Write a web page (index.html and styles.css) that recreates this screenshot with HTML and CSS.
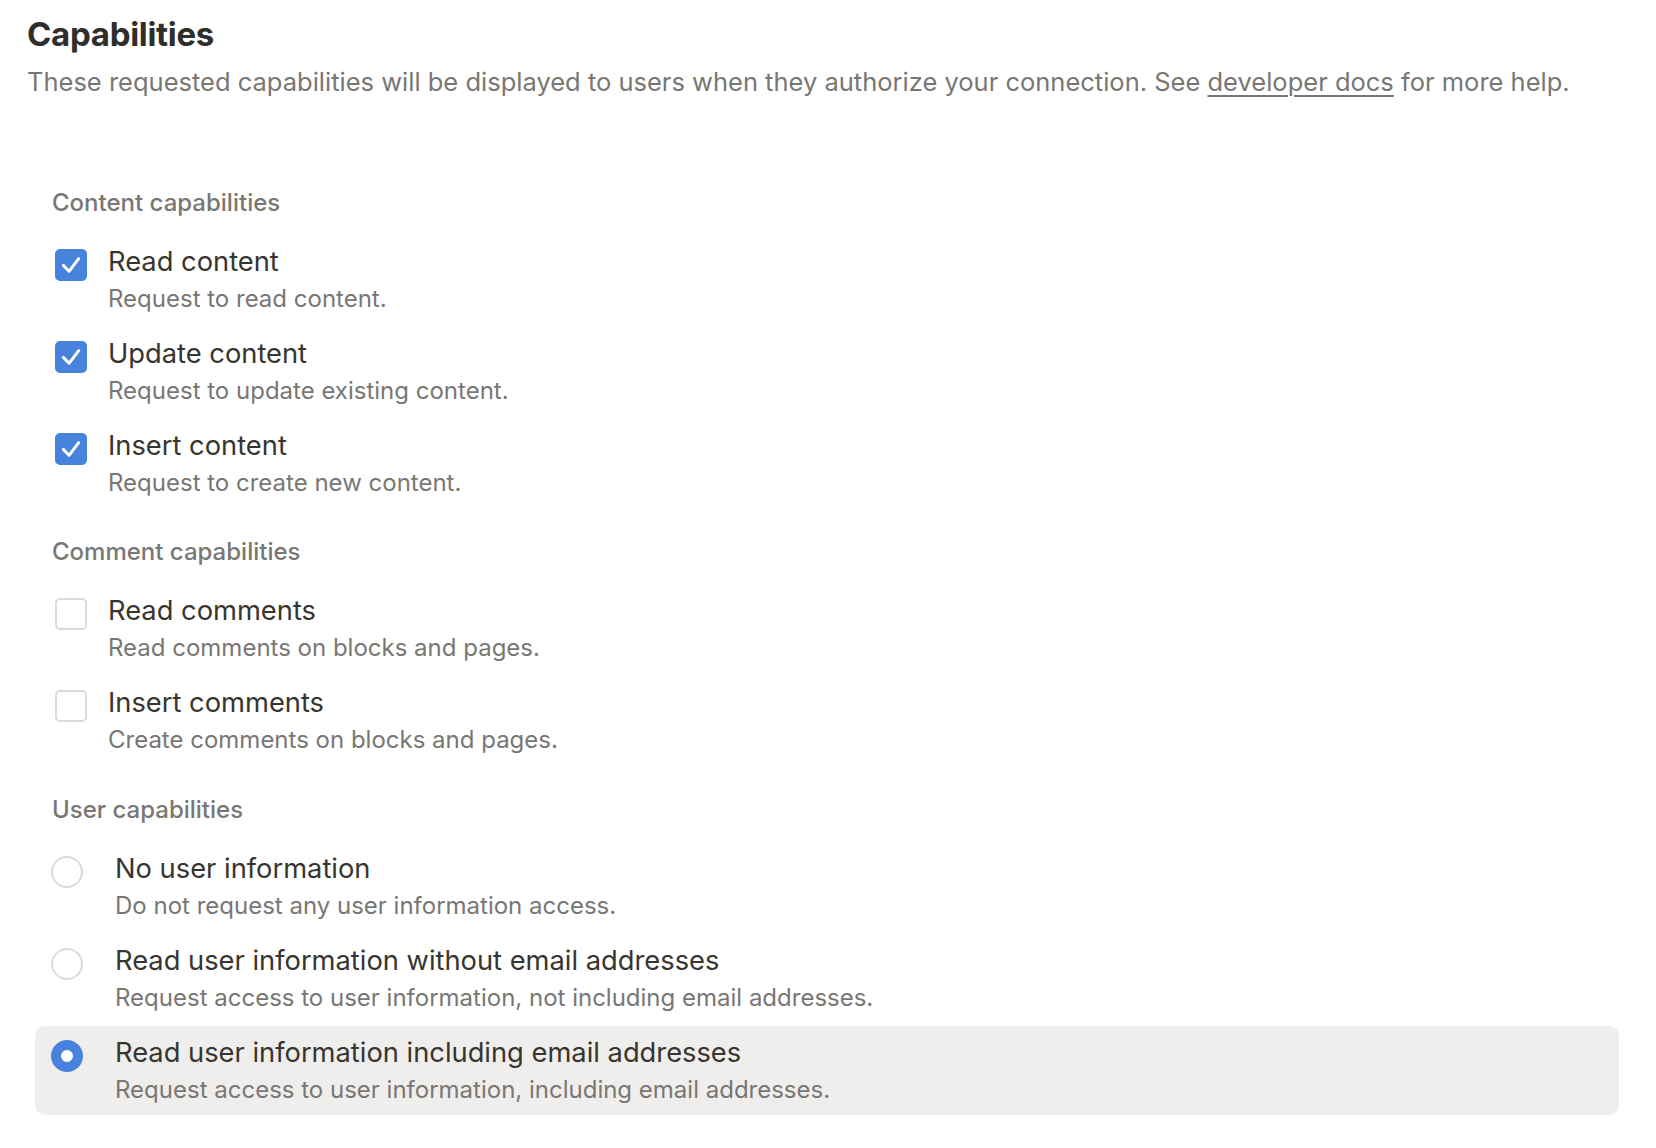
FILE: index.html
```html
<!DOCTYPE html>
<html lang="en">
<head>
    <meta charset="UTF-8">
    <meta name="viewport" content="width=device-width, initial-scale=1.0">
    <title>Capabilities</title>
    <link rel="stylesheet" href="styles.css">
</head>
<body>

    <!-- Page heading -->
    <div class="intro">
        <h1>Capabilities</h1>
        <p>These requested capabilities will be displayed to users when they authorize your connection. See <a href="#">developer docs</a> for more help.</p>
    </div>

    <div class="sections">
        <!-- Content capabilities -->
        <div class="section first">
            <div class="section-label">Content capabilities</div>
            <div class="option check-row">
                <span class="checkbox checked"><svg viewBox="0 0 16 16"><path d="M3.6 8.2 L6.9 11.6 L12.4 4.4"/></svg></span>
                <div class="option-text">
                    <div class="option-title">Read content</div>
                    <div class="option-desc">Request to read content.</div>
                </div>
            </div>
            <div class="option check-row">
                <span class="checkbox checked"><svg viewBox="0 0 16 16"><path d="M3.6 8.2 L6.9 11.6 L12.4 4.4"/></svg></span>
                <div class="option-text">
                    <div class="option-title">Update content</div>
                    <div class="option-desc">Request to update existing content.</div>
                </div>
            </div>
            <div class="option check-row">
                <span class="checkbox checked"><svg viewBox="0 0 16 16"><path d="M3.6 8.2 L6.9 11.6 L12.4 4.4"/></svg></span>
                <div class="option-text">
                    <div class="option-title">Insert content</div>
                    <div class="option-desc">Request to create new content.</div>
                </div>
            </div>
        </div>

        <!-- Comment capabilities -->
        <div class="section">
            <div class="section-label">Comment capabilities</div>
            <div class="option check-row">
                <span class="checkbox"></span>
                <div class="option-text">
                    <div class="option-title">Read comments</div>
                    <div class="option-desc">Read comments on blocks and pages.</div>
                </div>
            </div>
            <div class="option check-row">
                <span class="checkbox"></span>
                <div class="option-text">
                    <div class="option-title">Insert comments</div>
                    <div class="option-desc">Create comments on blocks and pages.</div>
                </div>
            </div>
        </div>

        <!-- User capabilities -->
        <div class="section users">
            <div class="section-label">User capabilities</div>
            <div class="option radio-row">
                <span class="radio"></span>
                <div class="option-text">
                    <div class="option-title">No user information</div>
                    <div class="option-desc">Do not request any user information access.</div>
                </div>
            </div>
            <div class="option radio-row">
                <span class="radio"></span>
                <div class="option-text">
                    <div class="option-title">Read user information without email addresses</div>
                    <div class="option-desc">Request access to user information, not including email addresses.</div>
                </div>
            </div>
            <div class="option radio-row selected">
                <span class="radio on"></span>
                <div class="option-text">
                    <div class="option-title">Read user information including email addresses</div>
                    <div class="option-desc">Request access to user information, including email addresses.</div>
                </div>
            </div>
        </div>
    </div>

</body>
</html>
```

FILE: styles.css
```css
/* Capabilities settings */
body { font-family: Inter, "Noto Sans", sans-serif; margin: 0; padding: 14px 37px 0 27px; background: #fff; color: #37352f; }
.intro h1 { margin: 0; font-size: 33px; line-height: 40px; font-weight: 700; letter-spacing: -0.3px; color: #2f2e2a; }
.intro p { margin: 10px 0 0; font-size: 25.5px; line-height: 36px; color: #787774; }
.intro a { color: #787774; text-decoration: underline; text-underline-offset: 4px; text-decoration-thickness: 1.5px; }

.sections { margin-left: 8px; }
.section { margin-top: 28px; }
.section.first { margin-top: 88px; }
.section.users { margin-top: 29px; }
.section-label { padding-left: 17px; font-size: 24px; line-height: 30px; font-weight: 500; color: #787774; margin-bottom: 18px; }
.section.users .section-label { margin-bottom: 17px; }

.option { display: flex; align-items: flex-start; border-radius: 10px; margin-bottom: 3px; }
.option-title { font-size: 27.3px; line-height: 36px; color: #37352f; }
.option-desc { font-size: 24px; line-height: 32px; margin-top: 3px; color: #787774; }

.check-row { padding: 8px 0 10px 20px; }
.check-row .option-text { margin-left: 21px; }
.checkbox { flex: none; width: 32px; height: 32px; margin-top: 5px; box-sizing: border-box; border: 2px solid #dcdad5; border-radius: 5px; display: flex; align-items: center; justify-content: center; }
.checkbox.checked { background: #4783dd; border-color: #4783dd; }
.checkbox svg { width: 30px; height: 30px; fill: none; stroke: #fff; stroke-width: 1.7; stroke-linecap: round; stroke-linejoin: round; }

.radio-row { padding: 9px 0 9px 16px; }
.radio-row .option-text { margin-left: 32px; }
.radio { flex: none; width: 32px; height: 32px; margin-top: 5px; box-sizing: border-box; border: 2px solid #dcdad5; border-radius: 50%; }
.radio.on { border: 10px solid #4783dd; background: #fff; }
.selected { background: #efeeec; }
```
